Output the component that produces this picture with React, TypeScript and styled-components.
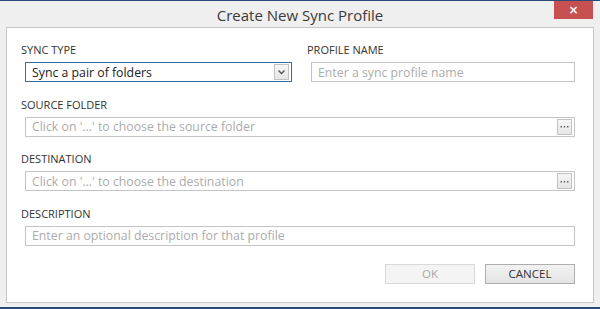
import React from "react";
import styled, { createGlobalStyle } from "styled-components";

const Global = createGlobalStyle`
  html, body { margin: 0; padding: 0; background: #efefef; }
  * { box-sizing: border-box; }
`;

const Window = styled.div`
  width: 600px;
  height: 309px;
  background: #efefef;
  border-top: 1px solid #2a4a78;
  border-bottom: 2px solid #2a4a78;
  display: flex;
  flex-direction: column;
  font-family: "Open Sans", "Noto Sans", sans-serif;
  color: #333;
`;

const TitleBar = styled.div`
  position: relative;
  height: 26px;
  display: flex;
  align-items: center;
  justify-content: center;
  font-size: 15px;
  color: #3a3a3a;
  padding-top: 2px;
`;

const CloseButton = styled.div`
  position: absolute;
  top: 0;
  right: 7px;
  width: 39px;
  height: 18px;
  background: #c75050;
  color: #fff;
  display: flex;
  align-items: center;
  justify-content: center;
  font-family: "DejaVu Sans", sans-serif;
  font-size: 12px;
  font-weight: bold;
  line-height: 1;
`;

const Panel = styled.div`
  margin: 0 6px 4px 6px;
  flex: 1;
  background: #fff;
  border: 1px solid #c6c6c6;
  padding: 15px 18px 0 14px;
  display: flex;
  flex-direction: column;
  gap: 15.67px;
`;

const Row = styled.div<{ $cols?: number }>`
  display: grid;
  grid-template-columns: ${(p) => (p.$cols === 2 ? "271px 1fr" : "1fr")};
  column-gap: 15px;
`;

const Field = styled.div`
  display: flex;
  flex-direction: column;
  gap: 5px;
`;

const Label = styled.div`
  font-size: 11px;
  line-height: 14px;
  height: 14px;
  color: #333;
  text-transform: uppercase;
`;

const Box = styled.div<{ $focused?: boolean }>`
  margin-left: 4px;
  height: 20px;
  border: 1px solid ${(p) => (p.$focused ? "#3d6aa3" : "#c4c4c4")};
  display: flex;
  align-items: center;
  padding: 0 2px 0 6px;
  font-size: 12.3px;
  background: #fff;
`;

const Value = styled.span<{ $placeholder?: boolean }>`
  flex: 1;
  color: ${(p) => (p.$placeholder ? "#acacac" : "#222")};
  white-space: nowrap;
  overflow: hidden;
`;

const SmallButton = styled.div`
  width: 15px;
  height: 16px;
  border: 1px solid #c2c2c2;
  background: linear-gradient(#f6f6f6, #e6e6e6);
  display: flex;
  align-items: center;
  justify-content: center;
  color: #555;
`;

const Actions = styled.div`
  display: flex;
  justify-content: flex-end;
  gap: 10px;
  margin-top: 2px;
`;

const Button = styled.div<{ $disabled?: boolean }>`
  width: 90px;
  height: 20px;
  display: flex;
  align-items: center;
  justify-content: center;
  font-size: 11.5px;
  border: 1px solid ${(p) => (p.$disabled ? "#d9d9d9" : "#adadad")};
  background: ${(p) => (p.$disabled ? "#f4f4f4" : "linear-gradient(#f2f2f2, #e4e4e4)")};
  color: ${(p) => (p.$disabled ? "#a8a8a8" : "#333")};
`;

const Chevron = () => (
  <svg width="9" height="6" viewBox="0 0 9 6">
    <path d="M1.5 1.5 L4.5 4.5 L7.5 1.5" fill="none" stroke="#555" strokeWidth="1.4" />
  </svg>
);

const Dots = () => (
  <svg width="9" height="3" viewBox="0 0 9 3">
    <rect x="0.5" y="1" width="1.5" height="1.5" fill="#666" />
    <rect x="3.75" y="1" width="1.5" height="1.5" fill="#666" />
    <rect x="7" y="1" width="1.5" height="1.5" fill="#666" />
  </svg>
);

export default function App() {
  return (
    <>
      <Global />
      <Window>
        <TitleBar>
          Create New Sync Profile
          <CloseButton>×</CloseButton>
        </TitleBar>
        <Panel>
          <Row $cols={2}>
            <Field>
              <Label>Sync Type</Label>
              <Box $focused>
                <Value>Sync a pair of folders</Value>
                <SmallButton>
                  <Chevron />
                </SmallButton>
              </Box>
            </Field>
            <Field>
              <Label>Profile Name</Label>
              <Box>
                <Value $placeholder>Enter a sync profile name</Value>
              </Box>
            </Field>
          </Row>
          <Row>
            <Field>
              <Label>Source Folder</Label>
              <Box>
                <Value $placeholder>Click on '...' to choose the source folder</Value>
                <SmallButton>
                  <Dots />
                </SmallButton>
              </Box>
            </Field>
          </Row>
          <Row>
            <Field>
              <Label>Destination</Label>
              <Box>
                <Value $placeholder>Click on '...' to choose the destination</Value>
                <SmallButton>
                  <Dots />
                </SmallButton>
              </Box>
            </Field>
          </Row>
          <Row>
            <Field>
              <Label>Description</Label>
              <Box>
                <Value $placeholder>Enter an optional description for that profile</Value>
              </Box>
            </Field>
          </Row>
          <Actions>
            <Button $disabled>OK</Button>
            <Button>CANCEL</Button>
          </Actions>
        </Panel>
      </Window>
    </>
  );
}
